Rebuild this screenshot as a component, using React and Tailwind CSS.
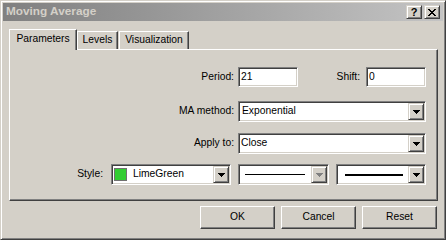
const raised =
  'border border-t-white border-l-white border-r-[#404040] border-b-[#404040] shadow-[inset_-1px_-1px_0_#808080]';
const raisedSmall =
  'border border-t-[#d4d0c8] border-l-[#d4d0c8] border-r-[#404040] border-b-[#404040] shadow-[inset_1px_1px_0_#ffffff,inset_-1px_-1px_0_#808080]';
const sunken =
  'border border-t-[#808080] border-l-[#808080] border-r-white border-b-white shadow-[inset_1px_1px_0_#404040,inset_-1px_-1px_0_#d4d0c8] p-px bg-white';

function Arrow({ disabled }) {
  return (
    <svg width="7" height="4" viewBox="0 0 7 4" shapeRendering="crispEdges">
      <path d="M0 0h7v1h-1v1h-1v1h-1v1h-1v-1h-1v-1h-1v-1h-1z" fill={disabled ? '#808080' : '#000'} />
    </svg>
  );
}

function Combo({ width, disabled, children }) {
  return (
    <div className={`flex h-[21px] ${width} ${sunken}`}>
      <div className="flex min-w-0 flex-1 items-center overflow-hidden">{children}</div>
      <div className={`flex w-[16px] items-center justify-center bg-[#d4d0c8] ${raisedSmall}`}>
        <Arrow disabled={disabled} />
      </div>
    </div>
  );
}

function Edit({ value }) {
  return (
    <div className={`flex h-[20px] w-[60px] items-center pl-[2px] ${sunken}`}>
      <span>{value}</span>
    </div>
  );
}

function PushButton({ children }) {
  return (
    <div className={`flex h-[23px] w-[75px] items-center justify-center bg-[#d4d0c8] ${raised}`}>
      {children}
    </div>
  );
}

export default function App() {
  return (
    <div className="h-[240px] w-[446px] bg-[#d4d0c8] font-['Liberation_Sans',Arial,sans-serif] text-[10.3px] leading-none text-black">
      <div className="h-full w-full border border-t-[#d4d0c8] border-l-[#d4d0c8] border-r-[#404040] border-b-[#404040] p-[2px] shadow-[inset_1px_1px_0_#ffffff,inset_-1px_-1px_0_#808080]">
        {/* title bar */}
        <div className="flex h-[18px] items-center bg-linear-to-r from-[#808080] to-[#c4c4c4] pl-[3px] pr-[3px]">
          <span className="flex-1 text-[11.8px] font-bold text-[#d4d0c8]">Moving Average</span>
          <div className={`flex h-[14px] w-[16px] items-center justify-center bg-[#d4d0c8] ${raisedSmall}`}>
            <span className="text-[11px] font-bold leading-none">?</span>
          </div>
          <div className={`ml-[2px] flex h-[14px] w-[16px] items-center justify-center bg-[#d4d0c8] ${raisedSmall}`}>
            <svg width="8" height="7" viewBox="0 0 8 7" shapeRendering="crispEdges">
              <path
                d="M0 0h2v1h1v1h2v-1h1v-1h2v1h-1v1h-1v1h-1v1h1v1h1v1h1v1h-2v-1h-1v-1h-2v1h-1v1h-2v-1h1v-1h1v-1h1v-1h-1v-1h-1v-1h-1z"
                fill="#000"
              />
            </svg>
          </div>
        </div>

        <div className="pl-[6px] pt-[8px]">
          {/* tabs */}
          <div className="relative z-10 flex h-[21px] items-end">
            <div className="flex h-[21px] w-[68px] justify-center border-l border-t border-white border-r border-r-[#404040] bg-[#d4d0c8] pt-[4px] shadow-[inset_-1px_0_0_#808080]">
              Parameters
            </div>
            <div className="mb-px flex h-[18px] w-[41px] justify-center border-l border-t border-white border-r border-r-[#404040] pt-[3px] shadow-[inset_-1px_0_0_#808080]">
              Levels
            </div>
            <div className="mb-px ml-px flex h-[18px] w-[70px] justify-center border-l border-t border-white border-r border-r-[#404040] pt-[3px] shadow-[inset_-1px_0_0_#808080]">
              Visualization
            </div>
          </div>

          {/* panel */}
          <div className="-mt-px h-[152px] w-[429px] border border-t-white border-l-white border-r-[#404040] border-b-[#404040] pt-[17px] shadow-[inset_-1px_-1px_0_#808080]">
            <div className="flex h-[20px] items-center">
              <span className="w-[224px] text-right">Period:</span>
              <div className="ml-[4px]">
                <Edit value="21" />
              </div>
              <span className="w-[64px] pr-[2px] text-right">Shift:</span>
              <div className="ml-[4px]">
                <Edit value="0" />
              </div>
            </div>

            <div className="mt-[14px] flex h-[21px] items-center">
              <span className="w-[224px] text-right">MA method:</span>
              <div className="ml-[4px]">
                <Combo width="w-[188px]">
                  <span className="pl-[2px]">Exponential</span>
                </Combo>
              </div>
            </div>

            <div className="mt-[11px] flex h-[21px] items-center">
              <span className="w-[224px] text-right">Apply to:</span>
              <div className="ml-[4px]">
                <Combo width="w-[188px]">
                  <span className="pl-[1px]">Close</span>
                </Combo>
              </div>
            </div>

            <div className="mt-[10px] flex h-[21px] items-center">
              <span className="w-[93px] text-right">Style:</span>
              <div className="ml-[8px]">
                <Combo width="w-[120px]">
                  <span className="ml-[1px] h-[13px] w-[13px] border border-[#707070] bg-[#32cd32]" />
                  <span className="ml-[6px]">LimeGreen</span>
                </Combo>
              </div>
              <div className="ml-[7px]">
                <Combo width="w-[91px]" disabled>
                  <span className="ml-[5px] h-px w-[60px] bg-black" />
                </Combo>
              </div>
              <div className="ml-[7px]">
                <Combo width="w-[90px]">
                  <span className="ml-[7px] h-[2px] w-[58px] bg-black" />
                </Combo>
              </div>
            </div>
          </div>

          {/* buttons */}
          <div className="mt-[5px] flex w-[428px] justify-end gap-[6px]">
            <PushButton>OK</PushButton>
            <PushButton>Cancel</PushButton>
            <PushButton>Reset</PushButton>
          </div>
        </div>
      </div>
    </div>
  );
}
